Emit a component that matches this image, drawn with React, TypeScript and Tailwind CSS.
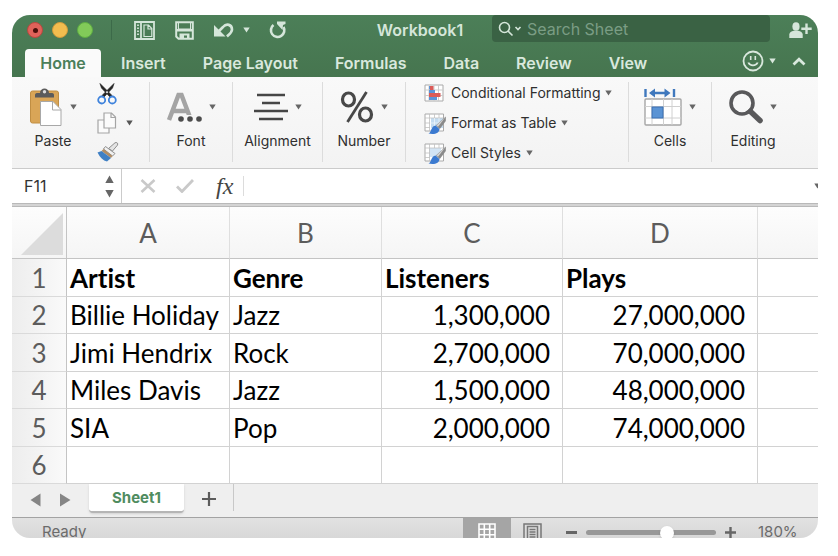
import React from "react";

const UI = "font-['Inter','Liberation_Sans',sans-serif]";
const SHEET = "font-['Lato','Noto_Sans',sans-serif]";

function Caret({ className = "" }: { className?: string }) {
  return (
    <svg viewBox="0 0 7 6" className={`h-[6px] w-[7px] shrink-0 ${className}`} fill="currentColor" aria-hidden="true">
      <path d="M0.3 0.4h6.4L3.5 5.6z" />
    </svg>
  );
}

function TitleBar() {
  return (
    <div className="flex h-[30px] items-center pl-[15px] pr-[6px] text-[#d5e6da]">
      <div className="flex gap-[9px]">
        <button aria-label="Close" className="flex size-4 items-center justify-center rounded-full border border-[#b8483f] bg-[#e0625a]">
          <span className="size-[5px] rounded-full bg-[#4a0f0b]" />
        </button>
        <button aria-label="Minimize" className="size-4 rounded-full border border-[#d09a3c] bg-[#f2bd4f]" />
        <button aria-label="Zoom" className="size-4 rounded-full border border-[#5fae43] bg-[#82ca59]" />
      </div>
      <div className="ml-[18px] h-5 w-px bg-[#3c6a49]" />
      <button aria-label="Templates" className="ml-[22px]">
        <svg viewBox="0 0 21 19" className="h-[19px] w-[21px]" fill="none" stroke="currentColor" strokeWidth="1.8">
          <path d="M1 1h19v17H1zM7 1v17" />
          <path d="M10 4h4.500l3.300 3.500V15.500H10zM14 4v4h4" strokeWidth="1.200" />
          <path d="M4 3.500v12" strokeDasharray="1.500 1.500" />
        </svg>
      </button>
      <button aria-label="Save" className="ml-5">
        <svg viewBox="0 0 19 19" className="size-[19px]" fill="none" stroke="currentColor" strokeWidth="2">
          <path d="M1.200 1.200h16.600v16.600H3.500L1.200 15.500z" />
          <path d="M3.500 1v7h12V1" strokeWidth="1" />
          <path d="M2 8h15v2.500H2z" fill="currentColor" stroke="none" />
          <path d="M4.500 18v-5.500h10V18H12v-3.500H9V18z" fill="currentColor" stroke="none" />
        </svg>
      </button>
      <button aria-label="Undo" className="ml-[19px]">
        <svg viewBox="0 0 21 16" className="h-4 w-[21px]" fill="none" stroke="currentColor" strokeWidth="2.600">
          <path d="M4.500 10.500L10 5C13.500 1 19 2.500 19 7.500c0 3-2.500 4.500-5 7" />
          <path d="M1 3v11.500h11.500z" fill="currentColor" stroke="none" />
        </svg>
      </button>
      <button aria-label="Undo history" className="ml-[9px]">
        <Caret />
      </button>
      <button aria-label="Redo" className="ml-[19px]">
        <svg viewBox="0 0 18 18" className="size-[18px]" fill="none" stroke="currentColor" strokeWidth="2.600">
          <path d="M4.500 4A6.700 6.700 0 1 0 14.500 6" />
          <path d="M8 .5h8.500v2.500L14 4l-.5 5L8 3z" fill="currentColor" stroke="none" />
        </svg>
      </button>
      <h1 className="ml-[88px] w-[90px] whitespace-nowrap text-center text-base leading-5 font-semibold">Workbook1</h1>
      <label className="ml-[27px] flex h-[27px] flex-1 items-center self-start rounded bg-[#3a6244] pl-[6px]">
        <svg viewBox="0 0 24 16" className="h-4 w-6 shrink-0" fill="none" stroke="currentColor" strokeWidth="1.600">
          <circle cx="6.500" cy="6.500" r="5" />
          <path d="M10 10l4.500 4.500M17.500 6l2.500 2.500L22.500 6" />
        </svg>
        <input
          aria-label="Search Sheet"
          placeholder="Search Sheet"
          className="ml-[5px] w-full min-w-0 bg-transparent text-base leading-5 outline-none placeholder:text-[#7a9d84]"
        />
      </label>
      <button aria-label="Share" className="ml-[19px]">
        <svg viewBox="0 0 23 17" className="h-[17px] w-[23px]" fill="currentColor">
          <ellipse cx="7" cy="4.500" rx="3.600" ry="4.300" />
          <path d="M.3 16v-3.500c0-2 2-3 4.500-3.700h4.400c2.500.7 4.500 1.700 4.500 3.700V16z" />
          <path d="M16.300 1.500h2.400v4h4v2.400h-4v4h-2.400v-4h-4V5.500h4z" />
        </svg>
      </button>
    </div>
  );
}

function RibbonTabs() {
  return (
    <nav className="flex h-[32px] items-end pl-[13px] pr-3 text-[#d9e8dd]">
      <button className="h-[28px] w-[76px] rounded-t-sm bg-[#fafafa] text-base leading-5 font-semibold text-[#4b7f5a]">Home</button>
      <div className="ml-5 flex h-[28px] items-center gap-[37px] text-base leading-5 font-semibold whitespace-nowrap">
        {["Insert", "Page Layout", "Formulas", "Data", "Review", "View"].map((t) => (
          <button key={t}>{t}</button>
        ))}
      </div>
      <div className="ml-auto flex h-[32px] items-center">
        <button aria-label="Feedback" className="flex items-center gap-[5px]">
          <svg viewBox="0 0 22 22" className="size-[22px]" fill="none" stroke="currentColor" strokeWidth="1.800">
            <circle cx="11" cy="11" r="9.500" />
            <path d="M8.700 6v4M13.300 6v4" strokeWidth="1.600" />
            <path d="M5.500 12.500h2c1 2.500 6 2.500 7 0h2c-1.500 5-9.500 5-11 0z" fill="currentColor" stroke="none" />
          </svg>
          <Caret />
        </button>
        <button aria-label="Collapse ribbon" className="ml-[16px]">
          <svg viewBox="0 0 14 9" className="h-[9px] w-[14px]" fill="none" stroke="currentColor" strokeWidth="2.800">
            <path d="M1.500 7.500L7 2.300l5.500 5.200" />
          </svg>
        </button>
      </div>
    </nav>
  );
}

function BigButton({ label, width, children }: { label: string; width: string; children: React.ReactNode }) {
  return (
    <button className={`flex ${width} shrink-0 flex-col items-center text-[#2f2f2f]`}>
      <span className="flex h-[49px] items-center gap-[7px]">
        {children}
        <Caret className="text-[#666]" />
      </span>
      <span className="text-sm leading-5">{label}</span>
    </button>
  );
}

const Divider = () => <div className="h-20 w-px shrink-0 bg-[#dcdcdc]" />;

function GridBrushIcon({ band }: { band: boolean }) {
  return (
    <svg viewBox="0 0 22 22" className="size-[22px]" fill="none">
      <path d="M1 1h18.500v17H1z" fill="#fff" stroke="#aaa" />
      {band ? <path d="M5 5h12v9H5z" fill="#d3e5f5" /> : <path d="M7 5h12v10H7z" fill="#c3dcf1" />}
      <path d="M1 5h18M1 10h5M1 14.500h5M5.500 1v17M10.500 1v4M15 1v4" stroke="#c0c0c0" strokeWidth=".8" />
      {!band && <path d="M6 10h13M10.500 5v10M15 5v10" stroke="#eef5fb" strokeWidth=".8" />}
      <path d="M21.800 3.500v4.500l-6 8-4-3.500z" fill="#8a8a8a" />
      <path d="M21.500 4L12.500 12.500l1.500 1.200z" fill="#d5d5d5" />
      <path d="M11.500 12.500l4 3.500c0 4-5 6-11 4.500 3-1 2.500-7.500 7-8z" fill="#3b7ad0" />
    </svg>
  );
}

function Ribbon() {
  return (
    <div className="flex h-[92px] items-start border-b border-[#cbcbcb] bg-gradient-to-b from-[#f9f9f9] to-[#f3f3f3] pt-[5px]">
      <div className="flex w-[137px] shrink-0 pl-3">
        <BigButton label="Paste" width="w-[58px]">
          <svg viewBox="0 0 34 40" className="h-10 w-[34px]" fill="none">
            <rect x="1.500" y="4" width="28" height="32" rx="2" fill="#d9a557" stroke="#c08e43" />
            <path d="M6 10.500V8c0-1.500 1-2 3-2h2c0-6 9-6 9 0h2c2 0 3 .5 3 2v2.500z" fill="#5b5b5b" />
            <circle cx="15.500" cy="4.700" r="1.700" fill="#ddd" />
            <path d="M11.500 14.500h12.500l8 8v16H11.500z" fill="#fff" stroke="#a8a8a8" />
            <path d="M23.500 14.500v8.500H32" stroke="#a8a8a8" />
          </svg>
        </BigButton>
        <div className="ml-[15px] flex flex-col text-[#555]">
          <button aria-label="Cut" className="h-[23px]">
            <svg viewBox="0 0 20 22" className="h-[22px] w-5" fill="none">
              <path d="M3 .5L4.500 5 13 14l2-1.500zM17 .5L15.500 5 7 14l-2-1.500z" fill="#242424" stroke="#242424" strokeWidth=".7" />
              <circle cx="4.700" cy="17" r="3.500" stroke="#3f83dc" strokeWidth="1.800" />
              <circle cx="15.300" cy="17" r="3.500" stroke="#3f83dc" strokeWidth="1.800" />
            </svg>
          </button>
          <button aria-label="Copy" className="mt-[6px] flex h-[23px] items-center gap-[9px]">
            <svg viewBox="0 0 20 22" className="h-[22px] w-5" fill="#fbfbfb" stroke="#a5a5a5" strokeWidth="1.200">
              <path d="M1 8h7l4 4v9H1z" />
              <path d="M7 1h7.500l4 4v11H7zM14 1v4.500h4.500" />
            </svg>
            <Caret />
          </button>
          <button aria-label="Format painter" className="mt-[8px] h-[20px]">
            <svg viewBox="0 0 22 20" className="h-5 w-[22px]" fill="none">
              <path d="M11.500 6.500L18 .8c1.500-1 3.500.5 2.500 2.300L15.500 9z" fill="#e4e4e4" stroke="#8e8e8e" />
              <path d="M8.500 4.500l9.500 7-2.500 2.500L6.500 7z" fill="#f1f1f1" stroke="#8e8e8e" />
              <path d="M6.500 7l9 7-1.500 2L4.500 9z" fill="#b28d64" />
              <path d="M4.500 9l9.500 7-4 3.500c-4-1-7-4-9.500-9z" fill="#4080c4" />
            </svg>
          </button>
        </div>
      </div>
      <Divider />
      <BigButton label="Font" width="w-[82px]">
        <svg viewBox="0 0 35 30" className="h-[30px] w-[35px]" fill="none">
          <path d="M2 28L11.500 3h3L24 28M6 19h14" stroke="#a4a4a4" strokeWidth="4.500" />
          <path d="M10.500 23h24.500v7H10.500z" fill="#f6f6f6" />
          <g fill="#4c4c4c">
            <circle cx="14" cy="27" r="2.800" />
            <circle cx="23" cy="27" r="2.800" />
            <circle cx="32" cy="27" r="2.800" />
          </g>
        </svg>
      </BigButton>
      <Divider />
      <BigButton label="Alignment" width="w-[89px]">
        <svg viewBox="0 0 34 28" className="h-7 w-[34px]" stroke="#464646" strokeWidth="2.600">
          <path d="M3 2h28M8 10h18M0 18h34M5 26h24" />
        </svg>
      </BigButton>
      <Divider />
      <BigButton label="Number" width="w-[82px]">
        <svg viewBox="0 0 34 32" className="h-8 w-[34px]" fill="none" stroke="#484848">
          <ellipse cx="8.500" cy="8.500" rx="6" ry="6.500" strokeWidth="3.200" />
          <ellipse cx="25.500" cy="23.500" rx="6" ry="6.500" strokeWidth="3.200" />
          <path d="M26.500 1L7.500 31" strokeWidth="2.800" />
        </svg>
      </BigButton>
      <Divider />
      <div className="flex w-[222px] shrink-0 flex-col pt-px pl-[18px] text-sm leading-5 whitespace-nowrap text-[#2f2f2f]">
        <button className="flex h-[30px] items-start gap-[5px]">
          <svg viewBox="0 0 22 20" className="h-5 w-[22px]" fill="none">
            <path d="M1 2h18v16H1z" fill="#fff" stroke="#aaa" />
            <path d="M5 2v16M10 2v16M14.500 2v16M1 7h18M1 12.500h18" stroke="#ccc" />
            <path d="M5 3h4v3.500H5zM5 13.500h8V17H5z" fill="#5b93d8" />
            <path d="M6 3h3.500v4H6zM5 10h11.500v4H5z" fill="#db5b58" />
            <path d="M5 7h6v3H5z" fill="#5b93d8" />
          </svg>
          Conditional Formatting
          <Caret className="mt-[7px] text-[#666]" />
        </button>
        <button className="flex h-[30px] items-start gap-[5px]">
          <GridBrushIcon band={false} />
          Format as Table
          <Caret className="mt-[7px] text-[#666]" />
        </button>
        <button className="flex h-[25px] items-start gap-[5px]">
          <GridBrushIcon band />
          Cell Styles
          <Caret className="mt-[7px] text-[#666]" />
        </button>
      </div>
      <Divider />
      <BigButton label="Cells" width="w-[82px]">
        <svg viewBox="0 0 38 38" className="size-[38px]" fill="none">
          <path d="M1.500 1v8M30 1v8" stroke="#3f78bd" strokeWidth="2.400" />
          <path d="M9 5h14" stroke="#3f78bd" strokeWidth="2.400" />
          <path d="M5 5l6-4.500v9zM26.500 5l-6-4.500v9z" fill="#3f78bd" />
          <rect x="1" y="11" width="36" height="26" rx="1" fill="#fff" stroke="#a5a5a5" strokeWidth="1.400" />
          <path d="M8 11v26M19.500 11v26M28 11v26M1 18.500h36M1 30h36" stroke="#d0d0d0" />
          <rect x="8" y="19" width="11" height="11" fill="#5a93d4" stroke="#3b6fb2" />
        </svg>
      </BigButton>
      <Divider />
      <BigButton label="Editing" width="w-[82px]">
        <svg viewBox="0 0 34 34" className="size-[34px]" fill="none" stroke="#59595b">
          <circle cx="13" cy="13" r="11" strokeWidth="3.600" />
          <path d="M21.500 21.500l9.500 9" strokeWidth="5.500" strokeLinecap="round" />
        </svg>
      </BigButton>
    </div>
  );
}

function FormulaBar() {
  return (
    <div className="flex h-[34px] items-center overflow-hidden bg-white text-[#666]">
      <input aria-label="Name box" defaultValue="F11" className="w-[80px] pl-3 text-base leading-5 text-[#333] outline-none" />
      <button aria-label="Choose cell" className="ml-[13px]">
        <svg viewBox="0 0 9 23" className="h-[23px] w-[9px]" fill="currentColor">
          <path d="M.3 8L4.500.5 8.700 8zM.3 15h8.400l-4.200 7.500z" />
        </svg>
      </button>
      <div className="ml-[7px] h-full w-px bg-[#cbcbcb]" />
      <button aria-label="Cancel" className="ml-[18px]">
        <svg viewBox="0 0 16 14" className="h-[14px] w-4" stroke="#c9c9c9" strokeWidth="2.600">
          <path d="M1.500 1l13 12M14.500 1l-13 12" />
        </svg>
      </button>
      <button aria-label="Enter" className="ml-5">
        <svg viewBox="0 0 18 14" className="h-[14px] w-[18px]" fill="none" stroke="#c9c9c9" strokeWidth="2.800">
          <path d="M1 7.500l5 5L17 1" />
        </svg>
      </button>
      <button aria-label="Insert function" className="ml-[22px] font-['Liberation_Serif',serif] text-2xl leading-6 text-[#444] italic">
        fx
      </button>
      <label className="ml-[10px] flex h-5 flex-1 items-center border-l border-[#dcdcdc]">
        <input aria-label="Formula" className="h-full w-full px-2 text-base text-[#222] outline-none" />
      </label>
      <button aria-label="Expand formula bar" className="-mr-[3px]">
        <Caret />
      </button>
    </div>
  );
}

const rows = [
  ["Artist", "Genre", "Listeners", "Plays"],
  ["Billie Holiday", "Jazz", "1,300,000", "27,000,000"],
  ["Jimi Hendrix", "Rock", "2,700,000", "70,000,000"],
  ["Miles Davis", "Jazz", "1,500,000", "48,000,000"],
  ["SIA", "Pop", "2,000,000", "74,000,000"],
  ["", "", "", ""],
];

function Sheet() {
  return (
    <table className={`${SHEET} w-full table-fixed border-separate border-spacing-0 text-[26px] leading-[30px] whitespace-nowrap text-black [font-variant-ligatures:none]`}>
      <colgroup>
        <col className="w-[55px]" />
        <col className="w-[163px]" />
        <col className="w-[152px]" />
        <col className="w-[181px]" />
        <col className="w-[195px]" />
        <col />
      </colgroup>
      <thead>
        <tr className="h-[52px] bg-gradient-to-b from-[#fdfdfd] to-[#f5f5f5] text-[#5c5c5c]">
          <th aria-label="Select all" className="border-r border-b border-[#c4c4c4] p-0">
            <svg viewBox="0 0 54 50" className="block h-[50px] w-[54px]">
              <path d="M51 5v42H9z" fill="#dcdcdc" />
            </svg>
          </th>
          {["A", "B", "C", "D", ""].map((c, i) => (
            <th key={i} scope="col" className="border-r border-b border-r-[#dfdfdf] border-b-[#c4c4c4] p-0 font-normal last:border-r-0">
              {c}
            </th>
          ))}
        </tr>
      </thead>
      <tbody>
        {rows.map((r, i) => (
          <tr key={i} className="h-[37px] odd:h-[38px]">
            <th scope="row" className="border-r border-b border-r-[#c4c4c4] border-b-[#dadada] bg-gradient-to-r from-[#ededed] to-[#fafafa] p-0 font-normal text-[#5c5c5c]">
              {i + 1}
            </th>
            {r.map((v, j) => (
              <td
                key={j}
                className={`border-r border-b border-[#d2d2d2] py-0 ${i === 0 ? "font-bold" : ""} ${i > 0 && j > 1 ? "pr-3 text-right" : "pl-[3px]"}`}
              >
                {v}
              </td>
            ))}
            <td className="border-b border-[#d2d2d2]" />
          </tr>
        ))}
      </tbody>
    </table>
  );
}

function SheetTabs() {
  return (
    <div className="flex h-[34px] items-start border-b border-[#a3a3a3] bg-[#efefef] text-[#858585]">
      <button aria-label="Previous sheet" className="mt-[9px] ml-[18px]">
        <svg viewBox="0 0 11 14" className="h-[14px] w-[11px]" fill="currentColor">
          <path d="M10.500 .5v13L.5 7z" />
        </svg>
      </button>
      <button aria-label="Next sheet" className="mt-[9px] ml-[19px]">
        <svg viewBox="0 0 11 14" className="h-[14px] w-[11px]" fill="currentColor">
          <path d="M0 .5v13L10.500 7z" />
        </svg>
      </button>
      <button className="ml-[18px] h-[29px] w-[95px] rounded-b-sm border-b-2 border-[#b5b5b5] bg-white text-[15px] leading-5 font-bold text-[#4f8c60] shadow-sm">
        Sheet1
      </button>
      <button aria-label="Add sheet" className="mt-2 ml-[18px]">
        <svg viewBox="0 0 14 14" className="size-[14px]" stroke="#5c5c5c" strokeWidth="2.200">
          <path d="M7 0v14M0 7h14" />
        </svg>
      </button>
      <div className="ml-[17px] h-[27px] w-px bg-[#c8c8c8]" />
    </div>
  );
}

function StatusBar() {
  return (
    <div className="flex h-5 items-start overflow-hidden bg-gradient-to-b from-[#e2e2e2] to-[#d8d8d8] pr-5 text-[#6b6b6b]">
      <span className="mt-1 ml-[30px] text-[15px] leading-5">Ready</span>
      <button aria-label="Normal view" className="ml-auto flex h-6 w-12 justify-center bg-[#a5a5a5] pt-[5px]">
        <svg viewBox="0 0 18 18" className="size-[18px]" fill="none" stroke="#fff" strokeWidth="1.600">
          <path d="M1 1h16v16H1zM6.300 1v16M11.700 1v16M1 6.300h16M1 11.700h16" />
        </svg>
      </button>
      <button aria-label="Page layout view" className="mt-[5px] ml-3">
        <svg viewBox="0 0 19 19" className="size-[19px]" fill="none" stroke="#777" strokeWidth="1.500">
          <path d="M1 1h17v17H1zM4.500 3.500h10v13h-10zM6.500 6.500h6M6.500 9h6M6.500 11.500h6M6.500 14h6" />
        </svg>
      </button>
      <button aria-label="Zoom out" className="mt-[13px] ml-[24px] h-[3px] w-[11px] bg-[#666]" />
      <input
        type="range"
        aria-label="Zoom level"
        min={0}
        max={100}
        defaultValue={64}
        className="mt-3 ml-[9px] h-[5px] w-[130px] appearance-none rounded-full bg-[#989898] [&::-webkit-slider-thumb]:size-[14px] [&::-webkit-slider-thumb]:appearance-none [&::-webkit-slider-thumb]:rounded-full [&::-webkit-slider-thumb]:bg-white [&::-webkit-slider-thumb]:shadow"
      />
      <button aria-label="Zoom in" className="mt-[9px] ml-[9px]">
        <svg viewBox="0 0 11 11" className="size-[11px]" stroke="#666" strokeWidth="2.400">
          <path d="M5.500 0v11M0 5.500h11" />
        </svg>
      </button>
      <span className="mt-1 ml-[22px] w-10 text-[15px] leading-5">180%</span>
    </div>
  );
}

export default function App() {
  return (
    <main className={`${UI} bg-white pt-[15px] pr-5 pb-[18px] pl-3`}>
      <div className="overflow-hidden rounded-[18px] bg-white">
        <header className="bg-gradient-to-b from-[#4c7f58] to-[#46754f]">
          <TitleBar />
          <RibbonTabs />
        </header>
        <Ribbon />
        <FormulaBar />
        <div className="h-1 border-y border-[#b9b9b9] bg-[#d4d4d4]" />
        <Sheet />
        <SheetTabs />
        <StatusBar />
      </div>
    </main>
  );
}
